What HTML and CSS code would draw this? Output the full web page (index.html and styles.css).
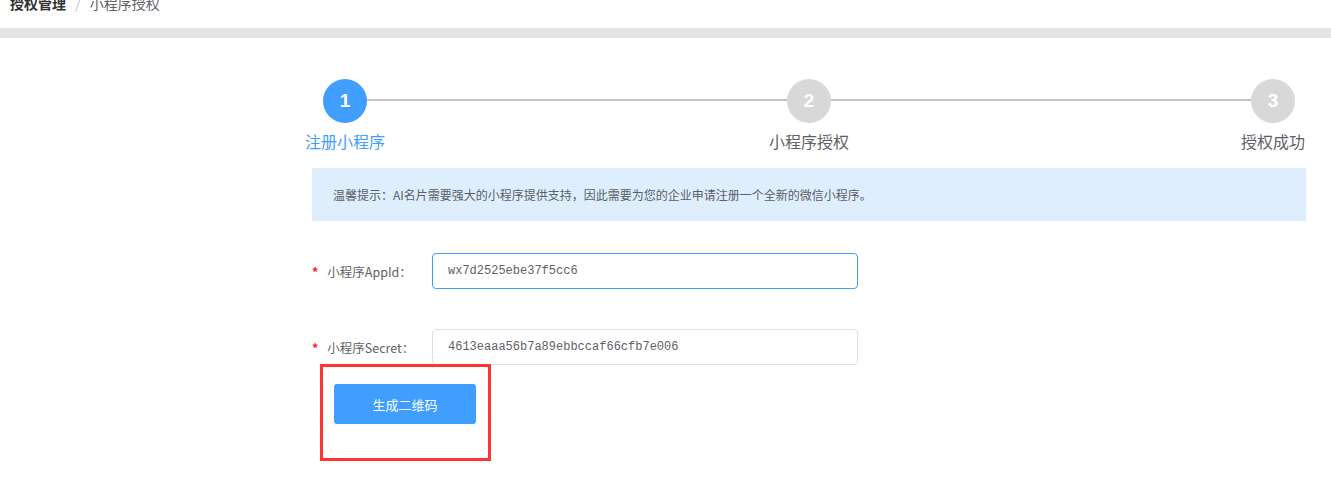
FILE: index.html
```html
<!DOCTYPE html>
<html lang="zh-CN">
<head>
    <meta charset="UTF-8">
    <title>小程序授权</title>
    <link rel="stylesheet" href="styles.css">
</head>
<body>
<div class="breadcrumb">
    <span class="crumb-main">授权管理</span>
    <span class="crumb-sep">/</span>
    <span class="crumb-cur">小程序授权</span>
</div>
<div class="divider"></div>
<div class="main">
    <div class="steps">
        <div class="step active">
            <div class="step-icon">1</div>
            <div class="step-title">注册小程序</div>
        </div>
        <div class="step-line"></div>
        <div class="step">
            <div class="step-icon">2</div>
            <div class="step-title">小程序授权</div>
        </div>
        <div class="step-line"></div>
        <div class="step">
            <div class="step-icon">3</div>
            <div class="step-title">授权成功</div>
        </div>
    </div>
    <div class="tip">温馨提示：AI名片需要强大的小程序提供支持，因此需要为您的企业申请注册一个全新的微信小程序。</div>
    <div class="form">
        <div class="form-item">
            <label class="form-label"><span class="star">*</span>小程序AppId：</label>
            <input class="form-input focused" type="text" value="wx7d2525ebe37f5cc6">
        </div>
        <div class="form-item last">
            <label class="form-label"><span class="star">*</span>小程序Secret：</label>
            <input class="form-input" type="text" value="4613eaaa56b7a89ebbccaf66cfb7e006">
        </div>
        <div class="btn-row">
            <button class="btn">生成二维码</button>
            <div class="mark"></div>
        </div>
    </div>
</div>
</body>
</html>
```

FILE: styles.css
```css
*{
    margin:0;
    padding:0;
    box-sizing: border-box;
}
body{
    font-family: "Noto Sans CJK SC", "Liberation Sans", sans-serif;
    background: #ffffff;
}
.breadcrumb{
    padding-left: 10px;
    font-size: 14px;
    line-height: 20px;
    margin-top: -7px;
    height: 35px;
}
.crumb-main{
    font-weight: bold;
    color: #303133;
}
.crumb-sep{
    color: #c0c4cc;
    margin: 0 6px;
}
.crumb-cur{
    color: #606266;
}
.divider{
    height: 10px;
    background: #e4e4e4;
}
.main{
    padding-left: 312px;
}
.steps{
    display: flex;
    align-items: flex-start;
    width: 972px;
    margin-left: 11px;
    margin-top: 41px;
}
.step{
    width: 44px;
    display: flex;
    flex-direction: column;
    align-items: center;
}
.step-icon{
    width: 44px;
    height: 44px;
    border-radius: 50%;
    background: #d8d8d8;
    color: #ffffff;
    font-family: "Liberation Sans", sans-serif;
    font-weight: bold;
    font-size: 19px;
    line-height: 44px;
    text-align: center;
}
.step-title{
    white-space: nowrap;
    margin-top: 7px;
    font-size: 16px;
    line-height: 22px;
    color: #606266;
}
.step.active .step-icon{
    background: #409eff;
}
.step.active .step-title{
    color: #409eff;
}
.step-line{
    flex: 1;
    height: 2px;
    background: #c0c4cc;
    margin-top: 20px;
}
.tip{
    width: 994px;
    height: 53px;
    margin-top: 16px;
    background: #dfeefd;
    padding-left: 21px;
    font-size: 12px;
    line-height: 53px;
    color: #5a5e66;
}
.form{
    margin-top: 32px;
}
.form-item{
    display: flex;
    align-items: center;
    margin-bottom: 40px;
}
.form-item.last{
    margin-bottom: 0;
}
.form-label{
    width: 120px;
    font-size: 12.5px;
    color: #606266;
}
.star{
    color: #ff2020;
    margin-right: 9px;
    font-weight: bold;
}
.form-input{
    width: 426px;
    height: 36px;
    border: 1px solid #dcdfe6;
    border-radius: 4px;
    padding: 0 15px;
    font-family: "Liberation Mono", monospace;
    font-size: 12px;
    color: #606266;
    outline: none;
}
.form-input.focused{
    border-color: #409eff;
}
.btn-row{
    position: relative;
    padding: 19px 0 40px 22px;
}
.btn{
    display: block;
    width: 142px;
    height: 40px;
    border: none;
    border-radius: 3px;
    background: #409eff;
    color: #ffffff;
    font-family: "Noto Sans CJK SC", sans-serif;
    font-size: 13px;
}
.mark{
    position: absolute;
    left: 8px;
    top: -1px;
    width: 171px;
    height: 97px;
    border: 3px solid #ff3333;
}
```
